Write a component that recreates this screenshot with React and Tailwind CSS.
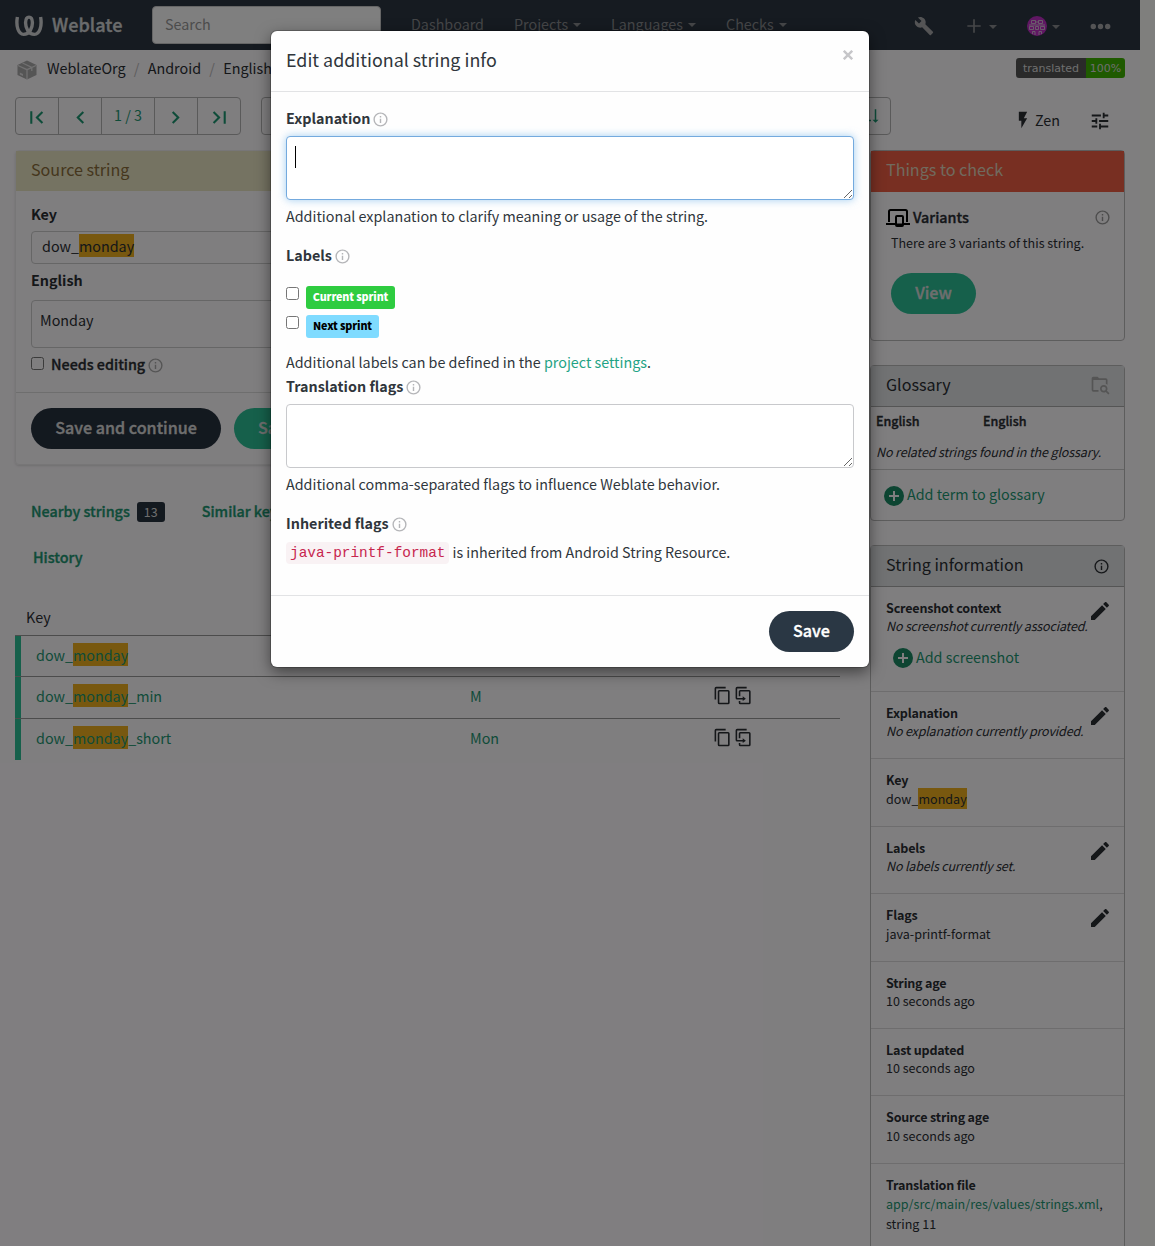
import React from "react";

const PATHS = {
  first: "M18.41,16.59L13.82,12L18.41,7.41L17,6L11,12L17,18L18.41,16.59M6,6H8V18H6V6Z",
  last: "M5.59,7.41L10.18,12L5.59,16.59L7,18L13,12L7,6L5.59,7.41M16,6H18V18H16V6Z",
  prev: "M15.41,16.58L10.83,12L15.41,7.41L14,6L8,12L14,18L15.41,16.58Z",
  next: "M8.59,16.58L13.17,12L8.59,7.41L10,6L16,12L10,18L8.59,16.58Z",
  info: "M11,9H13V7H11M12,20C7.59,20 4,16.41 4,12C4,7.59 7.59,4 12,4C16.41,4 20,7.59 20,12C20,16.41 16.41,20 12,20M12,2A10,10 0 0,0 2,12A10,10 0 0,0 12,22A10,10 0 0,0 22,12A10,10 0 0,0 12,2M11,17H13V11H11V17Z",
  pencil: "M20.71,7.04C21.1,6.65 21.1,6 20.71,5.63L18.37,3.29C18,2.9 17.35,2.9 16.96,3.29L15.12,5.12L18.87,8.87M3,17.25V21H6.75L17.81,9.93L14.06,6.18L3,17.25Z",
  plusCircle: "M17,13H13V17H11V13H7V11H11V7H13V11H17M12,2A10,10 0 0,0 2,12A10,10 0 0,0 12,22A10,10 0 0,0 22,12A10,10 0 0,0 12,2Z",
  copy: "M19,21H8V7H19M19,5H8A2,2 0 0,0 6,7V21A2,2 0 0,0 8,23H19A2,2 0 0,0 21,21V7A2,2 0 0,0 19,5M16,1H4A2,2 0 0,0 2,3V17H4V3H16V1Z",
  duplicate: "M11,17H4A2,2 0 0,1 2,15V3A2,2 0 0,1 4,1H16V3H4V15H11V13L15,16L11,19V17M19,21V7H8V13H6V7A2,2 0 0,1 8,5H19A2,2 0 0,1 21,7V21A2,2 0 0,1 19,23H8A2,2 0 0,1 6,21V19H8V21H19Z",
  tune: "M3,17V19H9V17H3M3,5V7H13V5H3M13,21V19H21V17H13V15H11V21H13M7,9V11H3V13H7V15H9V9H7M21,13V11H11V13H21M15,9H17V7H21V5H17V3H15V9Z",
  flash: "M7,2V13H10V22L17,10H13L17,2H7Z",
  wrench: "M22.7,19L13.6,9.9C14.5,7.6 14,4.9 12.1,3C10.1,1 7.1,0.6 4.7,1.7L9,6L6,9L1.6,4.7C0.4,7.1 0.9,10.1 2.9,12.1C4.8,14 7.5,14.5 9.8,13.6L18.9,22.7C19.3,23.1 19.9,23.1 20.3,22.7L22.6,20.4C23.1,20 23.1,19.3 22.7,19Z",
  plus: "M20,13H13V20H11V13H4V11H11V4H13V11H20V13Z",
  folderSearch: "M16.5,12C19,12 21,14 21,16.5C21,17.38 20.75,18.21 20.31,18.9L23.39,22L22,23.39L18.88,20.32C18.19,20.75 17.37,21 16.5,21C14,21 12,19 12,16.5C12,14 14,12 16.5,12M16.5,14A2.5,2.5 0 0,0 14,16.5A2.5,2.5 0 0,0 16.5,19A2.5,2.5 0 0,0 19,16.5A2.5,2.5 0 0,0 16.5,14M19,10.5V6H4V18H10.2V20H4A2,2 0 0,1 2,18V4A2,2 0 0,1 4,2H9L11,4H19A2,2 0 0,1 21,6V11.8Z",
  dots: "M16,12A2.4,2.4 0 0,1 20.8,12A2.4,2.4 0 0,1 16,12M9.6,12A2.4,2.4 0 0,1 14.4,12A2.4,2.4 0 0,1 9.6,12M3.2,12A2.4,2.4 0 0,1 8,12A2.4,2.4 0 0,1 3.2,12Z",
  sortDown: "M19 17H22L18 21L14 17H17V3H19V17M2 17H12V19H2M6 5V7H2V5M2 11H9V13H2V11Z",
};

const SEMI = "font-medium [-webkit-text-stroke:0.35px] ";

function Icon({ name, size = 20, className = "" }) {
  return (
    <svg viewBox="0 0 24 24" width={size} height={size} fill="currentColor" className={"shrink-0 " + className}>
      <path d={PATHS[name]} />
    </svg>
  );
}

function Logo() {
  return (
    <svg viewBox="0 0 28 22" width="28" height="22" fill="none" stroke="#d4d6d8" strokeWidth="3.4" className="mt-0.5 shrink-0">
      <path d="M2.4 2C0.8 11 3.2 19.4 8.6 19.4C14.5 19.4 17.6 13 17.4 7.5C17.3 4 16 2.1 14 2.1" />
      <path d="M25.6 2C27.2 11 24.8 19.4 19.4 19.4C13.5 19.4 10.4 13 10.6 7.5C10.7 4 12 2.1 14 2.1" />
    </svg>
  );
}

function Cube() {
  return (
    <svg viewBox="0 0 20 20" width="20" height="20" className="mt-px shrink-0" fill="#aaa">
      <path d="M10 0.5L0.5 5V15L10 19.5L19.5 15V5Z" />
      <path d="M1 5.5L10 9.7L19 5.5M10 9.7V19M5.5 3L14.8 7.4V11" stroke="#e2e1e2" strokeWidth="1.3" fill="none" />
      <path d="M2.8 12.4L6 14V16L2.8 14.4Z" fill="#e2e1e2" />
    </svg>
  );
}

function Variants() {
  return (
    <svg viewBox="0 0 24 19" width="24" height="19" className="shrink-0" fill="none" stroke="#000" strokeWidth="2">
      <path d="M3 14V3.5Q3 2 4.5 2H19.5Q21 2 21 3.500V14" />
      <path d="M0 16H24" />
      <rect x="10" y="8" width="7" height="10" rx="1" fill="#fffcff" />
      <path d="M10 16.500H17" />
    </svg>
  );
}

function Avatar() {
  return (
    <svg viewBox="0 0 20 20" width="20" height="20" className="shrink-0">
      <circle cx="10" cy="10" r="10" fill="#c02fc6" />
      <path d="M4.500 4.500H8.500V7.500H4.500ZM11.500 4.500H15.500V7.500H11.500ZM8 6H12M2.500 10.500H6.500V13.500H2.500ZM13.500 10.500H17.500V13.500H13.500ZM8.500 10.500H11.500V13.500H8.500ZM5.500 18V15.500H8V19M14.500 18V15.500H12V19M2 9H18" fill="none" stroke="#d8c6da" strokeWidth="0.9" />
    </svg>
  );
}

const Caret = () => <span className="mt-0.5 size-0 shrink-0 border-x-4 border-t-4 border-x-transparent border-t-[#8b8d90]" />;

const Mark = ({ children }) => <span className="bg-[#f0b01e] py-px">{children}</span>;

function Info({ title, children, pencil, h, lead, last }) {
  return (
    <div className={"flex items-start justify-between border-[#dcdbdc] pl-[15px] pr-[14px] pt-3 " + (last ? "" : "border-b ") + h}>
      <div className="whitespace-nowrap text-[12.54px] tracking-[0.01px]">
        <div className="h-[18px] font-bold leading-[18px] tracking-[-0.18px]">{title}</div>
        <div className={lead || "leading-[18px]"}>{children}</div>
      </div>
      {pencil && <Icon name="pencil" size={24} className="-ml-2 -mr-0.5" />}
    </div>
  );
}

function Row({ suffix, text, h }) {
  return (
    <div className={"flex items-center border-t border-[#999899] " + h}>
      <div className="w-1.5 self-stretch bg-[#2cc097]" />
      <div className="w-[449px] pb-[3px] pl-[15px] text-[#1d9873]">dow_<Mark>monday</Mark>{suffix}</div>
      <div className="w-[242.5px] pb-[3px] text-[#1d9873]">{text}</div>
      <Icon name="copy" size={19} className="mb-1 mr-0.5" />
      <Icon name="duplicate" size={19} className="mb-1" />
    </div>
  );
}

function Page() {
  return (
    <div className="flex h-[1246px] w-[1155px] bg-[#fffffb]">
      <div className="flex w-[1140px] flex-col bg-[#fffcff]">
        <nav className="flex h-[50px] shrink-0 items-center bg-[#2c3643] pl-[15px] text-[#8b8d90]">
          <Logo />
          <span className={SEMI + "ml-[9px] w-[100px] pb-0.5 text-[18.1px] leading-[48px] text-[#d4d6d8]"}>Weblate</span>
          <div className="flex h-[38px] w-[229px] items-center rounded-[4px] border border-[#ccc] bg-white pb-0.5 pl-3 text-[#999]">Search</div>
          <div className="ml-[30px] flex items-center pb-0.5">
            <span className="w-[103px]">Dashboard</span>
            <span className="flex w-[97px] items-center gap-[5px]">Projects <Caret /></span>
            <span className="flex w-[115px] items-center gap-[5px]">Languages <Caret /></span>
            <span className="flex items-center gap-[5px]">Checks <Caret /></span>
          </div>
          <div className="ml-auto flex items-center pt-0.5">
            <Icon name="wrench" size={20} className="mr-[30px] text-[#a8a9ab]" />
            <Icon name="plus" size={20} className="mr-[5px]" /><Caret />
            <span className="w-[30px]" />
            <Avatar />
            <span className="w-[5px]" /><Caret />
            <span className="w-[27px]" />
            <Icon name="dots" size={27} className="mr-[26px] text-[#a8a9ab]" />
          </div>
        </nav>

        <div className="flex h-[38px] shrink-0 items-center pl-[17px] pr-[15px]">
          <Cube />
          <div className="ml-2.5 flex pb-0.5">
            <span>WeblateOrg</span>
            <span className="mx-[8.3px] text-[#bbb]">/</span>
            <span>Android</span>
            <span className="mx-[8.3px] text-[#bbb]">/</span>
            <span>English</span>
          </div>
          <div className="ml-auto mt-[-2px] flex h-5 overflow-hidden rounded-[3px] font-['DejaVu_Sans'] text-[11px] leading-[21px] text-white">
            <span className="w-[70px] bg-[#555] text-center text-[#ddd]">translated</span>
            <span className="w-[39px] bg-[#3fb400] text-center text-[#ddd]">100%</span>
          </div>
        </div>

        <div className="mt-[9px] flex h-[38px] shrink-0 items-center pl-[15px] pr-[15px]">
          <div className="flex h-[38px] w-[226px] items-stretch divide-x divide-[#b4b4b4] rounded-[4px] border border-[#b4b4b4] text-[#1d9873]">
            <span className="flex w-[43px] items-center justify-center pr-0.5 pt-0.5"><Icon name="first" size={25} /></span>
            <span className="flex w-[43px] items-center justify-center pt-0.5"><Icon name="prev" size={25} /></span>
            <span className="flex w-[53px] items-center justify-center pb-0.5">1 / 3</span>
            <span className="flex w-[43px] items-center justify-center pr-0.5 pt-0.5"><Icon name="next" size={25} /></span>
            <span className="flex w-[42px] items-center justify-center pt-0.5"><Icon name="last" size={25} /></span>
          </div>
          <div className="ml-5 flex h-[38px] w-[630px] items-center justify-end rounded-[4px] border border-[#b4b4b4] pr-2.5 text-[#1d9873]">
            <Icon name="sortDown" size={18} />
          </div>
          <div className="ml-auto mt-[7px] flex items-center">
            <Icon name="flash" size={20} className="mr-0.5 mt-px" />
            <span>Zen</span>
            <Icon name="tune" size={22} className="ml-[29px] mr-3.5 mt-0.5" />
          </div>
        </div>

        <div className="mt-[15px] flex min-h-0 flex-1 overflow-hidden px-[15px]">
          <div className="flex w-[855px] shrink-0 flex-col pr-[30px]">
            <div className="h-[315px] shrink-0 rounded-[4px] border border-[#eeedee] shadow-sm">
              <div className="flex h-10 items-center bg-[#ebe7c4] pb-[5px] pl-[15px] text-[16.12px] text-[#8a6d3b]">Source string</div>
              <div className="h-[201px] px-[15px] pt-[11px]">
                <div className="h-[23px] font-bold leading-[23px]">Key</div>
                <div className="mt-1.5 flex h-[33px] items-center rounded-[4px] border border-[#ccc] pb-[3px] pl-2.5"><span>dow_<Mark>monday</Mark></span></div>
                <div className="mt-1 h-[23px] font-bold leading-[23px]">English</div>
                <div className="mt-[9px] h-12 rounded-[4px] border border-[#ccc] pl-2 pt-2 leading-[22px]">Monday</div>
                <div className={SEMI + "mt-1 flex h-[23px] items-center"}>
                  <span className="mr-[7px] size-[13px] rounded-[2.5px] border border-[#767676]" />Needs editing
                  <Icon name="info" size={17} className="ml-[2px] mt-[3px] text-[#aaa]" />
                </div>
              </div>
              <div className={SEMI + "flex border-t border-[#ddd] px-[15px] pt-[15px] text-[16.12px] text-[#ddd]"}>
                <span className="flex h-[41px] w-[190px] items-center justify-center rounded-full bg-[#27323f] pb-[3px]">Save and continue</span>
                <span className="ml-[13px] flex h-[41px] w-[140px] items-center rounded-full bg-[#2cc097] pb-[3px] pl-6">Save and stay</span>
              </div>
            </div>

            <div className={SEMI + "flex h-[92px] shrink-0 items-center pl-4 text-[#1d9873]"}>
              Nearby strings
              <span className="ml-[7px] mt-[2px] flex h-5 w-7 items-center justify-center rounded-[3px] bg-[#27323f] text-[12.5px] font-normal text-[#ddd] [-webkit-text-stroke:0px]">13</span>
              <span className="ml-[37px]">Similar keys</span>
            </div>
            <div className={SEMI + "-mt-3 ml-[18px] h-6 shrink-0 leading-6 text-[#1d9873]"}>History</div>
            <div className="mt-9 ml-[11px] h-[30px] shrink-0 leading-6">Key</div>
            <Row suffix="" text="Monday" h="h-[41px]" />
            <Row suffix="_min" text="M" h="h-[42px]" />
            <Row suffix="_short" text="Mon" h="h-[42px]" />
          </div>

          <div className="flex w-[255px] flex-col">
            <div className="h-[191px] shrink-0 rounded-[4px] border border-[#bbb]">
              <div className="flex h-[41px] items-center bg-[#f05f45] pb-[5px] pl-[15px] text-[16.12px] text-[#e2d5bd]">Things to check</div>
              <div className="flex items-center pl-[15px] pr-[13px] pt-[15px]">
                <Variants />
                <span className={SEMI + "-mt-px ml-[3px]"}>Variants</span>
                <Icon name="info" size={17} className="-mt-px ml-auto text-[#999]" />
              </div>
              <div className="ml-5 mt-[5px] text-[12.54px] leading-[20px]">There are 3 variants of this string.</div>
              <div className={SEMI + "ml-5 mt-5 flex h-[41px] w-[85px] items-center justify-center rounded-full bg-[#2cc097] pb-[3px] text-[16.12px] text-[#ddd]"}>View</div>
            </div>

            <div className="mt-6 h-[156px] shrink-0 rounded-[4px] border border-[#bbb]">
              <div className="flex h-[41px] items-center justify-between border-b border-[#aaa] bg-[#e2e4e6] pl-[15px] pr-3.5 text-[16.12px]"><span className="pb-[5px]">Glossary</span>
                <Icon name="folderSearch" size={20} className="mb-0.5 text-[#aaa]" />
              </div>
              <div className={SEMI + "flex h-[29px] items-center pb-0.5 pl-[5px] text-[12.54px] tracking-[-0.05px]"}><span className="w-[107px]">English</span><span>English</span></div>
              <div className="h-[34px] whitespace-nowrap border-b border-[#ccc] pl-[5px] text-[12.54px] italic leading-[31px] tracking-[-0.14px]">No related strings found in the glossary.</div>
              <div className="flex h-[51px] items-center pl-[11px] text-[#1d9873]"><Icon name="plusCircle" size={24} className="mr-px text-[#1a8a64]" /><span className="pb-[3px]">Add term to glossary</span></div>
            </div>

            <div className="mt-6 shrink-0 rounded-[4px] border border-[#bbb]">
              <div className="flex h-[41px] items-center justify-between border-b border-[#aaa] bg-[#e2e4e6] pl-[15px] pr-[14px] text-[16.12px]"><span className="pb-[5px]">String information</span>
                <Icon name="info" size={17} />
              </div>
              <Info title="Screenshot context" pencil h="h-[105px]">
                <span className="italic tracking-[-0.18px]">No screenshot currently associated.</span>
                <span className="ml-[5px] mt-[11px] flex h-6 items-center text-[14.33px] text-[#1d9873]"><Icon name="plusCircle" size={24} className="mr-px text-[#1a8a64]" /><span className="pb-0.5">Add screenshot</span></span>
              </Info>
              <Info title="Explanation" pencil h="h-[67px]"><span className="italic tracking-[-0.18px]">No explanation currently provided.</span></Info>
              <Info title="Key" h="h-[68px]" lead="leading-5">dow_<Mark>monday</Mark></Info>
              <Info title="Labels" pencil h="h-[67px]"><span className="italic tracking-[-0.18px]">No labels currently set.</span></Info>
              <Info title="Flags" pencil h="h-[68px]" lead="leading-5">java-printf-format</Info>
              <Info title="String age" h="h-[67px]">10 seconds ago</Info>
              <Info title="Last updated" h="h-[67px]">10 seconds ago</Info>
              <Info title="Source string age" h="h-[68px]" lead="leading-5">10 seconds ago</Info>
              <Info title="Translation file" h="h-[100px]" lead="leading-5" last><span className="text-[#1d9873]">app/src/main/res/values/strings.xml</span>,<br />string 11</Info>
            </div>
          </div>
        </div>
      </div>
    </div>
  );
}

function FieldTitle({ children }) {
  return (
    <div className="flex h-[23px] items-center font-bold tracking-[0.01px]">{children}
      <Icon name="info" size={17} className="ml-[2px] mt-[4px] text-[#b4b5b8]" />
    </div>
  );
}

function Grip() {
  return (
    <svg viewBox="0 0 8 8" width="8" height="8" className="mb-px mr-px" stroke="#666" strokeWidth="1">
      <path d="M0 8L8 0M5 8L8 5" />
    </svg>
  );
}

function Modal() {
  return (
    <div className="absolute left-[271px] top-[31px] flex h-[636px] w-[598px] flex-col rounded-[6px] bg-[#fefefe] text-[#30363c] shadow-[0_5px_15px_rgba(0,0,0,0.5)] ring-1 ring-black/20">
      <div className="flex h-[61px] items-center justify-between border-b border-[#e2e3e5] px-[15px]">
        <span className="pb-[5px] text-[17.9px]">Edit additional string info</span>
        <svg viewBox="0 0 10 10" width="10" height="10" className="mb-3 mr-px" stroke="#c6c6c9" strokeWidth="2.4">
          <path d="M0.8 0.8L9.2 9.2M9.2 0.8L0.8 9.2" />
        </svg>
      </div>
      <div className="flex h-[504px] flex-col border-b border-[#e2e3e5] px-[15px] pt-[14px]">
        <FieldTitle>Explanation</FieldTitle>
        <div className="mt-[7px] flex h-16 justify-between rounded-[4px] border border-[#74aade] bg-white shadow-[0_0_8px_rgba(102,175,233,0.6)]">
          <span className="ml-2 mt-[9px] h-[22px] w-px bg-black" />
          <span className="self-end"><Grip /></span>
        </div>
        <div className="mt-1 h-[23px] leading-[23px]">Additional explanation to clarify meaning or usage of the string.</div>
        <div className="mt-4"><FieldTitle>Labels</FieldTitle></div>
        <div className="mt-[20px] flex h-[23px]">
          <span className="mr-[7px] mt-px size-[13px] rounded-[2.5px] border border-[#767676] bg-white" />
          <span className="flex w-[89px] items-start justify-center rounded-[3px] bg-[#2ecc40] text-[10.75px] font-black leading-[21px] tracking-[-0.15px] text-white">Current sprint</span>
        </div>
        <div className="mt-1.5 flex h-[23px]">
          <span className="mr-[7px] mt-px size-[13px] rounded-[2.5px] border border-[#767676] bg-white" />
          <span className="flex w-[73px] items-start justify-center rounded-[3px] bg-[#7fdbff] text-[10.75px] font-black leading-[21px] tracking-[-0.15px] text-black">Next sprint</span>
        </div>
        <div className="mt-[12px] h-[23px] leading-[23px]">Additional labels can be defined in the <span className="text-[#1fa385]">project settings</span>.</div>
        <div className="mt-px"><FieldTitle>Translation flags</FieldTitle></div>
        <div className="mt-[7px] flex h-16 justify-end rounded-[4px] border border-[#c8c9cc] bg-white">
          <span className="self-end"><Grip /></span>
        </div>
        <div className="mt-1 h-[23px] leading-[23px]">Additional comma-separated flags to influence Weblate behavior.</div>
        <div className="mt-4"><FieldTitle>Inherited flags</FieldTitle></div>
        <div className="mt-[6px] flex h-[23px] items-center">
          <span className="mr-[3px] mt-0.5 rounded-[4px] bg-[#f9f2f4] px-1 pt-px font-['Liberation_Mono'] text-[14.4px] leading-[21px] text-[#c7254e]">java-printf-format</span>
          is inherited from Android String Resource.
        </div>
      </div>
      <div className="flex justify-end px-[15px] pt-[15px]">
        <span className={SEMI + "flex h-[41px] w-[85px] items-center justify-center rounded-full bg-[#2a3744] pb-[3px] text-[16.12px] text-white"}>Save</span>
      </div>
    </div>
  );
}

export default function App() {
  return (
    <div className="relative h-[1246px] w-[1155px] overflow-hidden font-['Noto_Sans_CJK_SC','Source_Sans_3',sans-serif] text-[14.33px] leading-[22px] text-[#2a2e33]">
      <Page />
      <div className="absolute inset-0 bg-black/50" />
      <Modal />
    </div>
  );
}
